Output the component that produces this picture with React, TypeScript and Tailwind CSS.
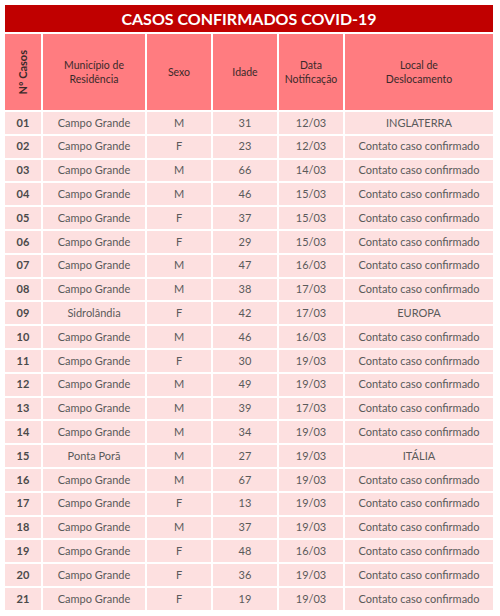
import React from 'react';

type Caso = [string, string, string, string, string, string];

const casos: Caso[] = [
  ['01', 'Campo Grande', 'M', '31', '12/03', 'INGLATERRA'],
  ['02', 'Campo Grande', 'F', '23', '12/03', 'Contato caso confirmado'],
  ['03', 'Campo Grande', 'M', '66', '14/03', 'Contato caso confirmado'],
  ['04', 'Campo Grande', 'M', '46', '15/03', 'Contato caso confirmado'],
  ['05', 'Campo Grande', 'F', '37', '15/03', 'Contato caso confirmado'],
  ['06', 'Campo Grande', 'F', '29', '15/03', 'Contato caso confirmado'],
  ['07', 'Campo Grande', 'M', '47', '16/03', 'Contato caso confirmado'],
  ['08', 'Campo Grande', 'M', '38', '17/03', 'Contato caso confirmado'],
  ['09', 'Sidrolândia', 'F', '42', '17/03', 'EUROPA'],
  ['10', 'Campo Grande', 'M', '46', '16/03', 'Contato caso confirmado'],
  ['11', 'Campo Grande', 'F', '30', '19/03', 'Contato caso confirmado'],
  ['12', 'Campo Grande', 'M', '49', '19/03', 'Contato caso confirmado'],
  ['13', 'Campo Grande', 'M', '39', '17/03', 'Contato caso confirmado'],
  ['14', 'Campo Grande', 'M', '34', '19/03', 'Contato caso confirmado'],
  ['15', 'Ponta Porã', 'M', '27', '19/03', 'ITÁLIA'],
  ['16', 'Campo Grande', 'M', '67', '19/03', 'Contato caso confirmado'],
  ['17', 'Campo Grande', 'F', '13', '19/03', 'Contato caso confirmado'],
  ['18', 'Campo Grande', 'M', '37', '19/03', 'Contato caso confirmado'],
  ['19', 'Campo Grande', 'F', '48', '16/03', 'Contato caso confirmado'],
  ['20', 'Campo Grande', 'F', '36', '19/03', 'Contato caso confirmado'],
  ['21', 'Campo Grande', 'F', '19', '19/03', 'Contato caso confirmado'],
];

const headers = ['Município de\nResidência', 'Sexo', 'Idade', 'Data\nNotificação', 'Local de\nDeslocamento'];

export default function App() {
  return (
    <div className="w-[500px] h-[616px] bg-white pt-[5px] pl-[5px] font-['Lato','Liberation_Sans',sans-serif]">
      <div className="w-[488px] flex flex-col gap-[2px]">
        <div className="h-[27px] bg-[#c00000] flex items-center justify-center text-white font-bold text-[16px]">
          CASOS CONFIRMADOS COVID-19
        </div>
        <div className="grid grid-cols-[36px_102px_64px_64px_64px_148px] gap-[2px]">
          <div className="h-[76px] bg-[#ff7c80] flex items-center justify-center">
            <span className="[writing-mode:vertical-rl] rotate-180 font-bold text-[11px] text-[#3a2a2a]">Nº Casos</span>
          </div>
          {headers.map((h) => (
            <div key={h} className="h-[76px] bg-[#ff7c80] flex items-center justify-center text-center whitespace-pre-line text-[10.5px] leading-[14px] text-[#3a2a2a]">
              {h}
            </div>
          ))}
          {casos.map((c) =>
            c.map((v, i) => (
              <div
                key={c[0] + i}
                className={
                  'h-[21.8px] bg-[#fde0e0] flex items-center justify-center text-[11px] ' +
                  (i === 0 ? 'font-bold text-[#4a4a4a]' : 'text-[#5a5a5a]')
                }
              >
                {v}
              </div>
            ))
          )}
        </div>
      </div>
    </div>
  );
}
